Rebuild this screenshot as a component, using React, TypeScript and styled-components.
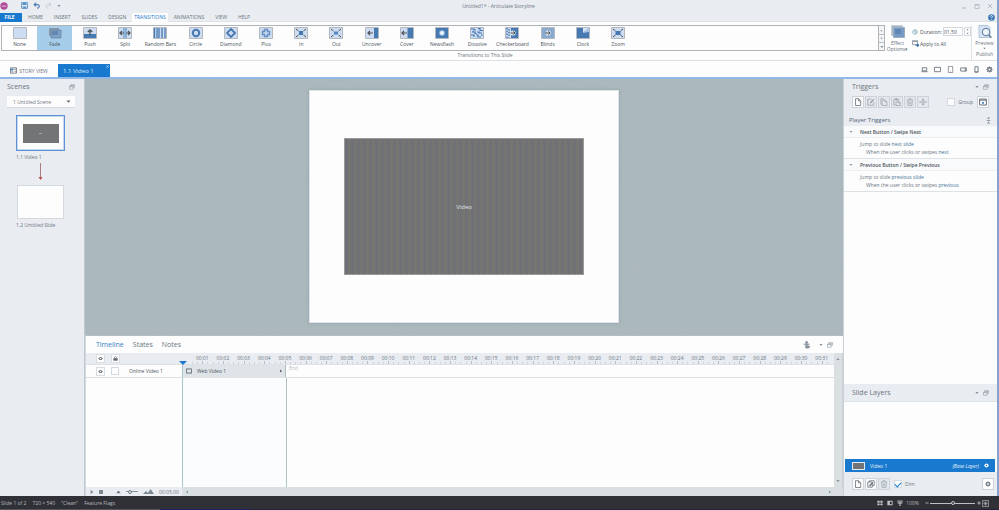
import React from 'react';
import styled, { createGlobalStyle, css } from 'styled-components';

const c = {
  blue: '#1979ce',
  panel: '#e9ecf1',
  white: '#fdfdfd',
  text: '#6b757e',
  dark: '#4c545c',
  line: '#dde2e7',
  link: '#3f7396',
};

const Global = createGlobalStyle`
  * { box-sizing: border-box; }
  body { margin: 0; font-family: "Open Sans", "Noto Sans", sans-serif; font-size: 5px; line-height: 8px; color: ${c.text}; background: ${c.panel}; }
  button, input, select { font: inherit; color: inherit; margin: 0; padding: 0; border: 0; background: none; border-radius: 0; }
  svg { display: block; flex: none; }
  h1, h2, h3, p { margin: 0; font: inherit; }
`;

const Window = styled.div`
  height: 100vh;
  min-height: 420px;
  display: flex;
  flex-direction: column;
  overflow: hidden;
`;
const Frame = styled.div`
  flex: 1;
  min-height: 0;
  display: flex;
  flex-direction: column;
  border-right: 2px solid #86a3cb;
`;

/* title bar and menu */
const TitleBar = styled.header`
  height: 13px;
  display: grid;
  grid-template-columns: 1fr auto 1fr;
  align-items: center;
  padding-bottom: 2px;
  background: ${c.panel};
`;
const QuickTools = styled.div`
  display: flex;
  align-items: center;
  gap: 5px;
`;
const Logo = styled.span`
  margin-right: 8px;
`;
const IconButton = styled.button`
  display: flex;
  align-items: center;
  justify-content: center;
  color: #87919a;
`;
const WindowButtons = styled.div`
  display: flex;
  justify-content: flex-end;
  gap: 5px;
  padding-right: 3px;
  button { width: 8px; color: #aab1b8; }
`;
const MenuBar = styled.nav`
  height: 9px;
  display: flex;
  background: ${c.panel};
  border-bottom: 1px solid ${c.line};
`;
const MenuItem = styled.button<{ $kind?: 'file' | 'active' }>`
  height: 9px;
  line-height: 9px;
  padding: 0 5px;
  margin-right: 1px;
  ${p => p.$kind === 'file' && css`background: ${c.blue}; color: #fff; font-weight: 700; width: 22px; padding: 0 3px 0 0;`}
  ${p => p.$kind === 'active' && css`background: ${c.white}; color: ${c.blue}; padding: 0 2px; margin: 0 1px 0 0;`}
`;
const HelpButton = styled(IconButton)`
  margin-left: auto;
  width: 7px;
  margin-right: 2px;
`;

/* ribbon */
const Ribbon = styled.section`
  height: 39px;
  flex: none;
  display: flex;
  padding-top: 3px;
  background: ${c.white};
  border-bottom: 1px solid ${c.line};
`;
const GalleryGroup = styled.div`
  flex: 1;
  margin-left: 1px;
  display: flex;
  flex-direction: column;
  text-align: center;
`;
const Gallery = styled.div`
  height: 26px;
  display: flex;
  border: 1px solid #aeb3b8;
`;
const GalleryItems = styled.div`
  flex: 1;
  display: grid;
  grid-template-columns: repeat(18, 4.02%);
`;
const Transition = styled.button<{ $on?: boolean }>`
  display: flex;
  flex-direction: column;
  align-items: center;
  padding-top: 1px;
  gap: 1px;
  white-space: nowrap;
  color: ${c.dark};
  background: ${p => (p.$on ? '#a5cdea' : 'transparent')};
`;
const GalleryScroll = styled.div`
  width: 6px;
  display: grid;
  grid-template-rows: repeat(3, 1fr);
  button { border-left: 1px solid #aeb3b8; background: #f3f5f7; }
  button + button { border-top: 1px solid #b9bec3; }
`;
const GroupLabel = styled.div`
  height: 9px;
  line-height: 9px;
  margin-left: 84px;
`;
const EffectButton = styled.button`
  width: 25px;
  display: flex;
  flex-direction: column;
  align-items: center;
  align-self: flex-start;
  line-height: 6px;
  gap: 1px;
`;
const Timing = styled.div`
  width: 62px;
  padding: 1px 0 0 2px;
  display: flex;
  flex-direction: column;
  gap: 1px;
  border-right: 1px solid ${c.line};
`;
const TimingRow = styled.div`
  height: 11px;
  display: flex;
  align-items: center;
  gap: 2px;
  color: ${c.dark};
  label { width: 21px; white-space: nowrap; }
  button { display: flex; align-items: center; gap: 1px; white-space: nowrap; }
`;
const DurationInput = styled.input`
  width: 20px;
  height: 9px;
  border: 1px solid #d3d9de;
  min-width: 0;
`;
const Spinner = styled.span`
  display: grid;
  width: 7px;
  height: 9px;
  border: 1px solid #d3d9de;
  place-items: center;
  margin-left: -1px;
  button { height: 3px; }
`;
const PreviewButton = styled.button`
  width: 25px;
  height: 35px;
  display: flex;
  flex-direction: column;
  align-items: center;
  line-height: 6px;
  gap: 1px;
`;

/* document tabs */
const DocBar = styled.div`
  height: 18px;
  flex: none;
  display: flex;
  align-items: flex-end;
  background: ${c.white};
  border-bottom: 2px solid #91b8e6;
`;
const StoryView = styled.button`
  width: 58px;
  height: 13px;
  display: flex;
  align-items: center;
  justify-content: center;
  gap: 2px;
`;
const SlideTab = styled.div`
  width: 52px;
  height: 13px;
  display: flex;
  justify-content: space-between;
  align-items: center;
  padding-left: 5px;
  background: ${c.blue};
  color: #dcecfb;
  font-size: 6px;
  button { align-self: flex-start; color: #dcecfb; padding: 1px 1px 0 0; }
`;
const Devices = styled.div`
  flex: 1;
  height: 16px;
  display: flex;
  align-items: center;
  justify-content: flex-end;
  gap: 3px;
  padding-right: 3px;
  button { width: 10px; color: #68727b; }
`;

/* workspace */
const Workspace = styled.main`
  flex: 1;
  min-height: 0;
  display: grid;
  grid-template-columns: 85px minmax(0, 1fr) 154px;
`;
const Scenes = styled.aside`
  background: ${c.panel};
  border-right: 1px solid #bfc7d0;
  padding: 0 9px 0 7px;
`;
const PanelHeading = styled.div`
  height: 16px;
  display: flex;
  align-items: center;
  justify-content: space-between;
  font-size: 7px;
`;
const HeadingTools = styled.div`
  display: flex;
  align-items: center;
  gap: 4px;
`;
const SelectWrap = styled.div`
  margin-top: 1px;
  height: 12px;
  display: flex;
  align-items: center;
  padding-right: 4px;
  background: ${c.white};
  border-bottom: 1px solid #d3d8dd;
  color: #5e6871;
  select { flex: 1; appearance: none; padding-left: 6px; outline: none; min-width: 0; color: ${c.text}; }
`;
const SceneMap = styled.div`
  width: 49px;
  margin: 7px 0 0 9px;
  display: flex;
  flex-direction: column;
`;
const Thumb = styled.button<{ $on?: boolean }>`
  height: ${p => (p.$on ? 36 : 34)}px;
  margin: ${p => (p.$on ? 0 : '0 1px')};
  display: grid;
  place-items: center;
  background: ${c.white};
  border: 1px solid ${p => (p.$on ? '#5d92d3' : '#d4d9df')};
  box-shadow: ${p => (p.$on ? 'inset 0 0 0 1px #c5d8ef' : 'none')};
`;
const ThumbVideo = styled.span<{ $small?: boolean }>`
  display: grid;
  place-items: center;
  width: ${p => (p.$small ? 11 : 36)}px;
  height: ${p => (p.$small ? 6 : 19)}px;
  background: #737475;
`;
const Dash = styled.span`
  width: 3px;
  height: 1px;
  background: #a5a7a9;
`;
const ThumbLabel = styled.p`
  height: 12px;
  line-height: 13px;
`;

const Center = styled.div`
  display: flex;
  flex-direction: column;
  min-width: 0;
  min-height: 0;
`;
const Stage = styled.section`
  flex: 1;
  min-height: 0;
  display: grid;
  place-items: center;
  padding: 11px 0 12px;
  background: repeating-linear-gradient(37deg, #b1bbb144 0 1px, transparent 1px 3px), repeating-linear-gradient(118deg, #9fb2be44 0 1px, transparent 1px 4px), #abb8be;
`;
const Slide = styled.div`
  height: 100%;
  aspect-ratio: 4 / 3;
  display: grid;
  place-items: center;
  background: ${c.white};
  border: 1px solid #e1e5e8;
  box-shadow: 0 0 3px #8f9da5;
`;
const Video = styled.div`
  width: 78%;
  height: 59%;
  display: grid;
  place-items: center;
  border: 1px solid #999a9b;
  background: repeating-linear-gradient(90deg, #707177 0 3px, #757671 3px 6px);
  color: #e0e4e8;
  font-size: 6px;
`;

/* timeline */
const Timeline = styled.section`
  height: 161px;
  display: flex;
  flex-direction: column;
  background: ${c.white};
  border-top: 1px solid #b4bdc4;
  border-left: 1px solid #d5dae0;
`;
const TimelineTabs = styled.div`
  height: 17px;
  display: flex;
  align-items: center;
  gap: 9px;
  padding: 0 10px;
  font-size: 7px;
`;
const TimelineTab = styled.button<{ $on?: boolean }>`
  color: ${p => (p.$on ? '#347dc5' : c.text)};
`;
const TimelineTools = styled(HeadingTools)`
  margin-left: auto;
  button:first-child { margin-right: 4px; }
`;
const TimelineGrid = styled.div`
  flex: 1;
  min-height: 0;
  display: grid;
  grid-template-columns: 96px minmax(0, 1fr) 9px;
  grid-template-rows: 12px 13px 1fr 9px;
`;
const Toggles = styled.div<{ $head?: boolean }>`
  display: flex;
  align-items: center;
  gap: 6px;
  padding-left: 10px;
  white-space: nowrap;
  background: ${p => (p.$head ? c.panel : c.white)};
  border-bottom: 1px solid ${c.line};
  span { margin-left: 4px; color: ${c.dark}; }
`;
const Toggle = styled.button`
  width: 9px;
  height: 9px;
  display: grid;
  place-items: center;
  color: #5e6871;
  background: ${c.white};
  border: 1px solid #d9dee3;
`;
const Check = styled.input`
  appearance: none;
  width: 8px;
  height: 8px;
  flex: none;
  display: grid;
  place-items: center;
  background: ${c.white};
  border: 1px solid #d3d9de;
  &:checked::after {
    content: '';
    width: 5px;
    height: 3px;
    border: solid ${c.blue};
    border-width: 0 0 1px 1px;
    transform: rotate(-45deg);
  }
`;
const Ruler = styled.div`
  position: relative;
  display: grid;
  grid-template-columns: repeat(31, minmax(0, 1fr));
  padding: 0 2px 0 10px;
  background: ${c.panel};
  border-bottom: 1px solid ${c.line};
`;
const Second = styled.div`
  display: flex;
  flex-direction: column;
  align-items: center;
  line-height: 9px;
  padding-top: 1px;
`;
const Ticks = styled.div`
  align-self: stretch;
  height: 3px;
  margin-top: -2px;
  padding-top: 0;
  flex: 1;
  display: grid;
  grid-template-columns: repeat(4, 1fr);
  align-items: end;
  i { height: 2px; border-left: 1px solid #ccd3d8; }
  i:nth-child(3) { height: 3px; border-color: #b7c0c6; }
`;
const Playhead = styled.span`
  position: absolute;
  left: -3px;
  bottom: -1px;
  border: 4px solid transparent;
  border-top: 4px solid ${c.blue};
  border-bottom: 0;
`;
const Track = styled.div`
  display: flex;
  border-bottom: 1px solid ${c.line};
  border-left: 1px solid #a9c4cf;
`;
const Clip = styled.div`
  width: 103px;
  display: flex;
  align-items: center;
  gap: 5px;
  padding: 0 2px 0 3px;
  background: #dfe4e8;
  border-right: 1px solid #aebbc2;
  color: ${c.dark};
  svg:last-child { margin-left: auto; }
`;
const EndLabel = styled.span`
  padding-left: 3px;
  color: #b3bbc2;
  line-height: 7px;
`;
const TrackBody = styled.div`
  border-left: 1px solid #a9c4cf;
  display: flex;
  &::before { content: ''; width: 103px; background: #fafcfd; border-right: 1px solid #b3c2c9; }
`;
const ScrollV = styled.div`
  grid-column: 3;
  grid-row: 1 / 4;
  display: flex;
  flex-direction: column;
  align-items: center;
  justify-content: space-between;
  padding: 4px 0;
  background: #dadfe2;
  border-right: 1px solid #cbd2d7;
`;
const ScrollH = styled.div`
  grid-column: 2 / 4;
  display: flex;
  align-items: center;
  justify-content: space-between;
  padding: 0 11px 0 3px;
  background: #dadfe2;
`;
const Transport = styled.div`
  display: flex;
  align-items: center;
  gap: 4px;
  padding-left: 3px;
  background: ${c.panel};
`;
const TransportZoom = styled.div`
  display: flex;
  align-items: center;
  gap: 5px;
  margin-left: 9px;
`;
const Range = styled.input<{ $light?: boolean }>`
  appearance: none;
  width: ${p => (p.$light ? 45 : 12)}px;
  height: 5px;
  background: linear-gradient(${p => (p.$light ? '#bfc0c4' : '#87919a')} 0 0) center / 100% 1px no-repeat;
  &::-webkit-slider-thumb {
    appearance: none;
    width: 4px;
    height: 4px;
    border-radius: 50%;
    border: 1px solid ${p => (p.$light ? '#c8c9cd' : '#727d86')};
    background: ${p => (p.$light ? '#303038' : c.panel)};
  }
`;

/* right dock */
const Dock = styled.aside`
  display: flex;
  flex-direction: column;
  min-height: 0;
  background: ${c.white};
  border-left: 1px solid #c9d0d7;
`;
const DockHead = styled.div`
  padding: 0 8px;
  background: ${c.panel};
`;
const Toolbar = styled.div`
  display: flex;
  align-items: center;
  height: 13px;
`;
const ToolButton = styled.button<{ $off?: boolean }>`
  width: 12px;
  height: 12px;
  margin-right: 1px;
  display: grid;
  place-items: center;
  color: ${p => (p.$off ? '#98a2aa' : '#66717a')};
  background: ${p => (p.$off ? '#e4e8ec' : c.white)};
  border: 1px solid #cdd3d9;
  &:last-child { margin-right: 0; }
`;
const CheckLabel = styled.label<{ $push?: boolean }>`
  display: flex;
  align-items: center;
  gap: 3px;
  margin-left: ${p => (p.$push ? 'auto' : '3px')};
  margin-right: 4px;
`;
const PlayerHead = styled.div`
  height: 18px;
  display: flex;
  align-items: center;
  justify-content: space-between;
  padding: 6px 5px 0;
  font-size: 6px;
  color: #4f6677;
  background: ${c.panel};
`;
const TriggerTitle = styled.h3`
  height: 12px;
  display: flex;
  align-items: center;
  gap: 7px;
  padding-left: 5px;
  font-weight: 600;
  color: ${c.dark};
  background: #f8fafb;
  border-bottom: 1px solid #eceff2;
  svg { color: #98a1a9; }
`;
const TriggerBody = styled.div`
  height: 21px;
  padding: 2px 0 0 16px;
  border-bottom: 1px solid ${c.line};
  a { color: ${c.link}; text-decoration: none; }
  p + p { padding-left: 6px; }
`;
const LayerHead = styled(DockHead)`
  margin-top: auto;
  padding-top: 1px;
  border-bottom: 1px solid ${c.line};
`;
const LayerSpace = styled.div`
  height: 57px;
`;
const LayerRow = styled.div`
  height: 13px;
  display: flex;
  align-items: center;
  gap: 5px;
  margin: 0 2px 0 1px;
  padding: 0 6px 0 7px;
  background: ${c.blue};
  color: #e8f3fc;
  em { margin-left: auto; }
`;
const ThumbFrame = styled.span`
  border: 1px solid #e0ebf5;
`;
const LayerTools = styled.div`
  height: 24px;
  display: flex;
  align-items: center;
  padding: 0 3px 0 8px;
  background: ${c.panel};
  > button:last-child { margin-left: auto; }
`;

const StatusBar = styled.footer`
  height: 14px;
  flex: none;
  display: flex;
  align-items: center;
  gap: 6px;
  padding: 0 10px 0 1px;
  white-space: nowrap;
  background: linear-gradient(90deg, #55565d 16%, #202060 16% 25%, #22223c 25%) bottom / 100% 1px no-repeat, #303037;
  color: #b9babd;
`;
const ViewTools = styled.div`
  margin-left: auto;
  display: flex;
  align-items: center;
  gap: 3px;
  button { color: #c3c4c8; min-width: 7px; height: 8px; }
`;
const ZoomSlider = styled.div`
  display: flex;
  align-items: center;
  margin-left: 1px;
`;

const line = { fill: 'none', stroke: 'currentColor', strokeWidth: 1 } as const;

function Glyph({ name, size = 8 }: { name: string; size?: number }) {
  const shapes: Record<string, React.ReactNode> = {
    save: <><path d="M.8.8h6.4v6.4H.8z" fill="none" stroke="#3f82bd" /><path d="M2 1h4v2.5H2zM2.4 5h3.2v2H2.4z" fill="#4f91c9" /></>,
    undo: <path d="M3.6.8 1.2 3l2.4 2.1M1.4 3h3.2C8 3 8 7 4.6 7" fill="none" stroke="#4e7eb5" strokeWidth="1.2" />,
    redo: <path d="M4.5.8 6.8 3 4.5 5.1M6.6 3H3.5C.2 3 .2 7 3.5 7" fill="none" stroke="#c2c9d0" />,
    min: <path d="M2.5 6h3.5" {...line} />,
    max: <path d="M2 2.5h4v4H2zM2 3h4" {...line} strokeWidth=".7" />,
    close: <path d="m2 2 4 4M6 2 2 6" {...line} strokeWidth=".8" />,
    tabClose: <path d="m1 1 6 6M7 1 1 7" {...line} strokeWidth="1.8" />,
    clock: <><circle cx="4" cy="4" r="3" {...line} stroke="#63a0bd" /><path d="M4 2v2.3h1.7" {...line} strokeWidth=".7" /></>,
    apply: <><path d="M.6.8h5.8v4.5H.6zM.6 1.8h5.8" {...line} stroke="#8a949c" /><path d="M4 6h3M6 4.5 7.6 6 6 7.6" fill="none" stroke="#2367b5" strokeWidth="1.2" /></>,
    story: <><path d="M.5 1h7v6h-7z" {...line} /><path d="M1 2h3v2H1z" fill="#3c82c5" /><path d="M5 2.8h2M5 5h2M1.5 5.4h2" {...line} strokeWidth=".8" /></>,
    laptop: <><path d="M1.5 2h5v3.5h-5z" {...line} /><path d="M.5 6.5h7" {...line} /></>,
    tablet: <path d="M.5 1.5h7v5h-7z" {...line} />,
    tabletV: <><path d="M1.5.5h5v7h-5z" {...line} strokeWidth=".8" /><path d="M3.5 6.7h1" {...line} strokeWidth=".6" /></>,
    phoneH: <path d="M.8 2.2h6.4v3.6H.8zM6 2v4" {...line} />,
    phone: <><path d="M2.2.8h3.6v6.4H2.2z" {...line} /><path d="M2 6.2h4" {...line} strokeWidth=".7" /></>,
    gear: <><circle cx="4" cy="4" r="2" fill="none" stroke="currentColor" strokeWidth="1.5" /><path d="M4 .5v1.4M4 6.1v1.4M.5 4h1.4M6.1 4h1.4m-6-2.5 1 1m3 3 1 1m0-5-1 1m-3 3-1 1" {...line} strokeWidth="1.2" /></>,
    restore: <path d="M2.3 2.5V1h5v3.5H5.5M.7 2.8h4.8v4.3H.7zM.7 3.6h4.8M2.3 1.6h5" {...line} strokeWidth=".7" />,
    down: <path d="M.8 2.2h6.4L4 6z" fill="currentColor" />,
    up: <path d="M.8 5.8h6.4L4 2z" fill="currentColor" />,
    left: <path d="M5.8 1v6L2 4z" fill="currentColor" />,
    right: <path d="M2.2 1v6L6 4z" fill="currentColor" />,
    doc: <path d="M1.5.7h3.2l2 2v4.8H1.5zM4.5.9v2h2" {...line} strokeWidth=".8" />,
    edit: <><path d="M6.8 4v3.2H.8v-6h3.5" {...line} strokeWidth=".8" /><path d="m2.8 5.4.4-1.5L6.4.7l1 1-3.1 3.2z" fill="currentColor" /></>,
    copy: <path d="M2.2 6.2H.8V.8h3l.8.8M2.2 2.2h3L7 4v3.5H2.2zM5 2.5V4h1.8" {...line} strokeWidth=".7" />,
    paste: <path d="M2.5 7H.8V1.5h5v1M2.3 1.5V.6h2v.9M3 3h2.4L7.2 4.8v2.7H3zM5.2 3.2v1.7H7" {...line} strokeWidth=".8" />,
    trash: <path d="M.8 2h6.4M3 1.7v-1h2v1M1.6 2.2l.4 5.2h4l.4-5.2M3.2 3.5v2.8M4.8 3.5v2.8" {...line} strokeWidth=".7" />,
    move: <><path d="M.3 4h7.4" {...line} /><path d="M2.3 2.6h3.4L4 .5zM2.3 5.4h3.4L4 7.5z" fill="currentColor" /></>,
    window: <><path d="M.6 1h6.8v6H.6zM.6 2.2h6.8" {...line} /><path d="M3 4h2v1.7H3z" fill="#4b83b9" /></>,
    dots: <><path d="M2.2.5h3.6L4 2.8zM2.2 7.5h3.6L4 5.2z" fill="currentColor" /><path d="M2 4h4" {...line} /></>,
    eye: <><path d="M.4 4Q4-.8 7.6 4 4 8.8.4 4z" fill="currentColor" /><circle cx="4" cy="4" r="1.2" fill="#fff" /></>,
    layerEye: <><path d="M0 4Q4-2.2 8 4 4 10.2 0 4z" fill="#fff" /><circle cx="4" cy="4" r="1.3" fill={c.blue} /></>,
    lock: <><path d="M.6 3.5h6.8v4H.6z" fill="currentColor" /><path d="M2.3 4V2.5c0-2.3 3.4-2.3 3.4 0V4" {...line} /></>,
    person: <><circle cx="3.6" cy="1.2" r="1.2" fill="currentColor" /><path d="M.8 3.2h5.6" {...line} strokeWidth="1.2" /><path d="M2.6 2.6h2v2.2H7v1L5.5 7.6H3L1.5 5.5h1.1z" fill="currentColor" /></>,
    frame: <path d="M.5 1.2h7v5.6h-7z" {...line} stroke="#5e6870" strokeWidth="1.2" />,
    layers: <><path d="M.8 2h4.5v5.2H.8zM2.3 2V.8h4.9v4.8H5.5" {...line} strokeWidth=".8" /><path d="m2 5.5 3-3 1 1-3 3z" fill="currentColor" /></>,
    grid: <path d="M.5 1h3v2.6h-3zM4.5 1h3v2.6h-3zM.5 4.5h3v2.6h-3zM4.5 4.5h3v2.6h-3z" fill="currentColor" />,
    slideView: <path d="M.5 1h7v6h-7zM3.8 2.2v3.6h2.6V2.2z" fill="currentColor" fillRule="evenodd" />,
    present: <><path d="M.5 1.3h7M1.5 1.5v3h5v-3M4 4.5V7M2.5 7h3" {...line} /><path d="M2.5 2.3h3v1.4h-3z" fill="currentColor" /></>,
    fit: <path d="M.5.5h7v7h-7zM4 1.5v5M1.5 4h5M2 2l1 1M6 2 5 3M2 6l1-1M6 6 5 5" {...line} strokeWidth=".7" />,
    minus: <path d="M1 4h6" {...line} strokeWidth="1.6" />,
    plus: <path d="M.5 4h7M4 .5v7" {...line} strokeWidth="1.6" />,
    hill: <path d="M.5 6.7 4 2.2l3.5 4.5z" fill="currentColor" />,
  };
  return <svg width={size} height={size} viewBox="0 0 8 8" aria-hidden="true">{shapes[name]}</svg>;
}

const B = '#4679b2';
const D = '#4b5258';
function TransitionIcon({ kind }: { kind: string }) {
  const diag = 'm2 2 2.5 2M12 2 9.5 4M2 10l2.5-2M12 10 9.5 8';
  const art: Record<string, React.ReactNode> = {
    None: null,
    Fade: <><path d="M1 1h10v8H1z" fill="#8798aa" /><path d="M3 3h10v8H3z" fill="#7fa0c7" stroke="#66819e" strokeWidth=".7" /><path d="M4 4h6v4H4z" fill="#6388b2" /></>,
    Push: <><path d="M1 7h12v4H1z" fill={B} /><path d="M7 8V3M4.8 5 7 2.8 9.2 5" fill="none" stroke={D} strokeWidth="1.3" /></>,
    Split: <><path d="M5 1h4v10H5z" fill="#8db2d8" /><path d="M6 6H2m2-2L2 6l2 2M8 6h4m-2-2 2 2-2 2" fill="none" stroke={D} strokeWidth="1.2" /></>,
    'Random Bars': <path d="M1.5 1v10M4 1v10M6 1v10M9 1v10M12 1v10" stroke={B} strokeWidth="1.3" />,
    Circle: <circle cx="7" cy="6" r="3.2" fill="none" stroke={B} strokeWidth="2" />,
    Diamond: <path d="m7 2 4 4-4 4-4-4z" fill="none" stroke={B} strokeWidth="1.8" />,
    Plus: <path d="M5.5 2.5h3v2h2v3h-2v2h-3v-2h-2v-3h2z" fill="none" stroke="#648fc2" strokeWidth="1.5" />,
    In: <><path d="M5 4h4v4H5z" fill={B} /><path d={diag} stroke={D} /></>,
    Out: <><path d="M5 4.5h4v3H5z" fill="#5489c6" /><path d={diag} stroke={D} /></>,
    Uncover: <><path d="M9 1h4v10H9z" fill={B} /><path d="M8 6H3m2-2L3 6l2 2" fill="none" stroke={D} strokeWidth="1.2" /></>,
    Cover: <><path d="M7.5 1H13v10H7.5z" fill={B} /><path d="M7 6H2m2-2L2 6l2 2" fill="none" stroke={D} strokeWidth="1.2" /></>,
    Newsflash: <><path d="M1 1h12v10H1z" fill={B} /><circle cx="7" cy="6" r="3" fill="#84aed6" /><circle cx="7" cy="6" r="2" fill="#f0f6fc" /></>,
    Dissolve: <path d="M1 2h3v1h2M8 1.5h2v2h3M2 5h3v2M7 5h2v1h3M1 8h3v2M6 8h2v2h3M11 8h2M3 4v1M6 6v1" fill="none" stroke={B} strokeWidth="1.2" />,
    Checkerboard: <><path d="M6 1h7v10H6z" fill={B} /><path d="M2 1v10M4 2v9" stroke={B} strokeWidth="1.5" strokeDasharray="1.4 1.4" /><circle cx="8" cy="6" r="2.6" fill="#dfe6ec" /><path d="M5.5 6H10M8.4 4.4 10 6 8.4 7.6" fill="none" stroke={D} /></>,
    Blinds: <><path d="M2 1v10M4 1v10M6 1v10M8 1v10M10 1v10M12 1v10" stroke={B} /><circle cx="7" cy="6" r="2.6" fill="#dfe6ec" /><path d="M4 6h5M7.4 4.4 9 6 7.4 7.6" fill="none" stroke={D} /></>,
    Clock: <><path d="M1 1h12v10H1z" fill={B} /><path d="M7 1h6L7 6z" fill="#d7e5f5" /><path d="M13 1v4L7 6z" fill="#a7c6e7" /></>,
    Zoom: <><path d="M4.5 4h5v4h-5z" fill={B} /><path d={diag} stroke={D} /></>,
  };
  return (
    <svg width="14" height="12" viewBox="0 0 14 12" aria-hidden="true">
      {kind !== 'Fade' && <path d="M.5.5h13v11H.5z" fill="#cddcf0" stroke="#b4b9bf" />}
      {art[kind]}
    </svg>
  );
}

const transitions = ['None', 'Fade', 'Push', 'Split', 'Random Bars', 'Circle', 'Diamond', 'Plus', 'In', 'Out', 'Uncover', 'Cover', 'Newsflash', 'Dissolve', 'Checkerboard', 'Blinds', 'Clock', 'Zoom'];
const seconds = Array.from({ length: 31 }, (_, i) => `00:${String(i + 1).padStart(2, '0')}`);
const devices = ['laptop', 'tablet', 'tabletV', 'phoneH', 'phone', 'gear'];

function Trigger({ title, target }: { title: string; target: string }) {
  return (
    <section>
      <TriggerTitle><Glyph name="down" size={4} />{title}</TriggerTitle>
      <TriggerBody>
        <p>Jump to slide <a href="#slide">{target} slide</a></p>
        <p>When the user clicks or swipes <a href="#swipe">{target}</a></p>
      </TriggerBody>
    </section>
  );
}

export default function App() {
  return (
    <Window>
      <Global />
      <Frame>
        <TitleBar>
          <QuickTools>
            <Logo><svg width="8" height="8" viewBox="0 0 8 8"><circle cx="4" cy="4" r="3.7" fill="#b04e9b" /><path d="M2 5.3 3.5 3l1.3 2L6 3.5" fill="none" stroke="#e9bfe0" strokeWidth=".8" /></svg></Logo>
            <IconButton aria-label="Save"><Glyph name="save" size={7} /></IconButton>
            <IconButton aria-label="Undo"><Glyph name="undo" size={7} /></IconButton>
            <IconButton aria-label="Redo"><Glyph name="redo" size={7} /></IconButton>
            <IconButton aria-label="Customize"><Glyph name="down" size={4} /></IconButton>
          </QuickTools>
          <h1>Untitled1* - Articulate Storyline</h1>
          <WindowButtons>
            {['min', 'max', 'close'].map(n => <IconButton key={n} aria-label={n}><Glyph name={n} /></IconButton>)}
          </WindowButtons>
        </TitleBar>
        <MenuBar>
          <MenuItem $kind="file">FILE</MenuItem>
          <MenuItem>HOME</MenuItem>
          <MenuItem>INSERT</MenuItem>
          <MenuItem>SLIDES</MenuItem>
          <MenuItem>DESIGN</MenuItem>
          <MenuItem $kind="active">TRANSITIONS</MenuItem>
          <MenuItem>ANIMATIONS</MenuItem>
          <MenuItem>VIEW</MenuItem>
          <MenuItem>HELP</MenuItem>
          <HelpButton aria-label="Help"><svg width="7" height="7" viewBox="0 0 8 8"><circle cx="4" cy="4" r="3.8" fill="#3d78b6" /><path d="M2.7 3C2.8 1.2 5.4 1.4 5.2 3 5.1 3.8 4 3.8 4 4.9M4 5.7v.8" fill="none" stroke="#fff" strokeWidth=".9" /></svg></HelpButton>
        </MenuBar>
        <Ribbon>
          <GalleryGroup>
            <Gallery>
              <GalleryItems>
                {transitions.map(t => <Transition key={t} $on={t === 'Fade'}><TransitionIcon kind={t} />{t}</Transition>)}
              </GalleryItems>
              <GalleryScroll>
                <IconButton aria-label="Scroll up"><Glyph name="up" size={3} /></IconButton>
                <IconButton aria-label="Scroll down"><Glyph name="down" size={3} /></IconButton>
                <IconButton aria-label="More"><Glyph name="down" size={4} /></IconButton>
              </GalleryScroll>
            </Gallery>
            <GroupLabel>Transitions to This Slide</GroupLabel>
          </GalleryGroup>
          <EffectButton>
            <svg width="14" height="14" viewBox="0 0 14 14"><path d="M.5.5h11v10H.5z" fill="#a7b7c9" stroke="#c3cbd4" /><path d="M2.5 2.5h11v10h-11z" fill="#789bc5" stroke="#9daebf" /><path d="M4 4h6v5H4z" fill="#5e86b7" /></svg>
            <span>Effect<br />Options▾</span>
          </EffectButton>
          <Timing>
            <TimingRow>
              <Glyph name="clock" size={6} />
              <label htmlFor="duration">Duration:</label>
              <DurationInput id="duration" defaultValue="01.50" />
              <Spinner>
                <IconButton aria-label="Increase"><Glyph name="up" size={3} /></IconButton>
                <IconButton aria-label="Decrease"><Glyph name="down" size={3} /></IconButton>
              </Spinner>
            </TimingRow>
            <TimingRow><button><Glyph name="apply" size={7} />Apply to All</button></TimingRow>
          </Timing>
          <PreviewButton>
            <svg width="14" height="14" viewBox="0 0 14 14"><path d="M1 .5h9l2 2v10H1z" fill="#d7e4f3" stroke="#94b1cf" strokeWidth=".7" /><circle cx="8" cy="7" r="3.7" fill="#edf4fa" stroke="#7289a5" strokeWidth="1.2" /><path d="m10.7 9.8 2.7 3" stroke="#687d97" strokeWidth="1.5" /></svg>
            <span>Preview</span>
            <Glyph name="down" size={3} />
            <span>Publish</span>
          </PreviewButton>
        </Ribbon>
        <DocBar>
          <StoryView><Glyph name="story" size={7} />STORY VIEW</StoryView>
          <SlideTab>1.1 Video 1<IconButton aria-label="Close tab"><Glyph name="tabClose" size={3} /></IconButton></SlideTab>
          <Devices>
            {devices.map(n => <IconButton key={n} aria-label={n}><Glyph name={n} size={7} /></IconButton>)}
          </Devices>
        </DocBar>
        <Workspace>
          <Scenes>
            <PanelHeading><h2>Scenes</h2><IconButton aria-label="Undock scenes"><Glyph name="restore" size={6} /></IconButton></PanelHeading>
            <SelectWrap>
              <select aria-label="Scene"><option>1 Untitled Scene</option></select>
              <Glyph name="down" size={5} />
            </SelectWrap>
            <SceneMap>
              <Thumb $on aria-label="1.1 Video 1"><ThumbVideo><Dash /></ThumbVideo></Thumb>
              <ThumbLabel>1.1 Video 1</ThumbLabel>
              <svg width="49" height="22" viewBox="0 0 49 22"><path d="M24.5 0v14" stroke="#aa7c80" /><path d="M22.5 14h4l-2 3z" fill="#b84d4b" /></svg>
              <Thumb aria-label="1.2 Untitled Slide" />
              <ThumbLabel>1.2 Untitled Slide</ThumbLabel>
            </SceneMap>
          </Scenes>
          <Center>
            <Stage><Slide><Video>Video</Video></Slide></Stage>
            <Timeline>
              <TimelineTabs>
                <TimelineTab $on>Timeline</TimelineTab>
                <TimelineTab>States</TimelineTab>
                <TimelineTab>Notes</TimelineTab>
                <TimelineTools>
                  <IconButton aria-label="Accessibility"><Glyph name="person" size={8} /></IconButton>
                  <IconButton aria-label="Panel menu"><Glyph name="down" size={4} /></IconButton>
                  <IconButton aria-label="Undock timeline"><Glyph name="restore" size={6} /></IconButton>
                </TimelineTools>
              </TimelineTabs>
              <TimelineGrid>
                <Toggles $head>
                  <Toggle aria-label="Show all"><Glyph name="eye" size={5} /></Toggle>
                  <Toggle aria-label="Lock all"><Glyph name="lock" size={5} /></Toggle>
                </Toggles>
                <Ruler>
                  {seconds.map(s => <Second key={s}>{s}<Ticks><i /><i /><i /><i /></Ticks></Second>)}
                  <Playhead />
                </Ruler>
                <Toggles>
                  <Toggle aria-label="Show video"><Glyph name="eye" size={5} /></Toggle>
                  <Check type="checkbox" aria-label="Lock video" />
                  <span>Online Video 1</span>
                </Toggles>
                <Track>
                  <Clip><Glyph name="frame" size={6} />Web Video 1<Glyph name="right" size={4} /></Clip>
                  <EndLabel>End</EndLabel>
                </Track>
                <div />
                <TrackBody />
                <ScrollV>
                  <IconButton aria-label="Scroll timeline up"><Glyph name="up" size={4} /></IconButton>
                  <IconButton aria-label="Scroll timeline down"><Glyph name="down" size={4} /></IconButton>
                </ScrollV>
                <Transport>
                  <IconButton aria-label="Play"><Glyph name="right" size={6} /></IconButton>
                  <IconButton aria-label="Stop"><svg width="4" height="4"><path d="M0 0h4v4H0z" fill="#7c8790" /></svg></IconButton>
                  <TransportZoom>
                    <Glyph name="hill" size={5} />
                    <Range type="range" defaultValue={20} aria-label="Timeline zoom" />
                    <svg width="11" height="5" viewBox="0 0 11 5"><path d="m0 5 3-3 2 2 2.5-4L11 5z" fill="#7c8790" /></svg>
                    <span>00:05.00</span>
                  </TransportZoom>
                </Transport>
                <ScrollH>
                  <IconButton aria-label="Scroll left"><Glyph name="left" size={4} /></IconButton>
                  <IconButton aria-label="Scroll right"><Glyph name="right" size={4} /></IconButton>
                </ScrollH>
              </TimelineGrid>
            </Timeline>
          </Center>
          <Dock>
            <DockHead>
              <PanelHeading>
                <h2>Triggers</h2>
                <HeadingTools>
                  <IconButton aria-label="Triggers menu"><Glyph name="down" size={4} /></IconButton>
                  <IconButton aria-label="Undock triggers"><Glyph name="restore" size={6} /></IconButton>
                </HeadingTools>
              </PanelHeading>
              <Toolbar>
                <ToolButton aria-label="New trigger"><Glyph name="doc" /></ToolButton>
                {['edit', 'copy', 'paste', 'trash', 'move'].map(n => <ToolButton key={n} $off aria-label={n}><Glyph name={n} /></ToolButton>)}
                <CheckLabel $push><Check type="checkbox" />Group</CheckLabel>
                <ToolButton aria-label="Variables"><Glyph name="window" /></ToolButton>
              </Toolbar>
            </DockHead>
            <PlayerHead><h2>Player Triggers</h2><IconButton aria-label="Collapse"><Glyph name="dots" size={7} /></IconButton></PlayerHead>
            <Trigger title="Next Button / Swipe Next" target="next" />
            <Trigger title="Previous Button / Swipe Previous" target="previous" />
            <LayerHead>
              <PanelHeading>
                <h2>Slide Layers</h2>
                <HeadingTools>
                  <IconButton aria-label="Layers menu"><Glyph name="down" size={4} /></IconButton>
                  <IconButton aria-label="Undock layers"><Glyph name="restore" size={6} /></IconButton>
                </HeadingTools>
              </PanelHeading>
            </LayerHead>
            <LayerSpace />
            <LayerRow><ThumbFrame><ThumbVideo $small /></ThumbFrame>Video 1<em>(Base Layer)</em><Glyph name="layerEye" size={5} /></LayerRow>
            <LayerTools>
              <ToolButton aria-label="New layer"><Glyph name="doc" /></ToolButton>
              <ToolButton aria-label="Duplicate layer"><Glyph name="layers" /></ToolButton>
              <ToolButton $off aria-label="Delete layer"><Glyph name="trash" /></ToolButton>
              <CheckLabel><Check type="checkbox" defaultChecked />Dim</CheckLabel>
              <ToolButton aria-label="Layer settings"><Glyph name="gear" size={6} /></ToolButton>
            </LayerTools>
          </Dock>
        </Workspace>
      </Frame>
      <StatusBar>
        <span>Slide 1 of 2</span><span>720 × 540</span><span>"Clean"</span><span>Feature Flags</span>
        <ViewTools>
          {['grid', 'slideView', 'present'].map(n => <IconButton key={n} aria-label={n}><Glyph name={n} size={6} /></IconButton>)}
          <span>100%</span>
          <ZoomSlider>
            <IconButton aria-label="Zoom out"><Glyph name="minus" size={4} /></IconButton>
            <Range $light type="range" defaultValue={50} aria-label="Zoom" />
            <IconButton aria-label="Zoom in"><Glyph name="plus" size={4} /></IconButton>
            <IconButton aria-label="Fit"><Glyph name="fit" size={7} /></IconButton>
          </ZoomSlider>
        </ViewTools>
      </StatusBar>
    </Window>
  );
}
